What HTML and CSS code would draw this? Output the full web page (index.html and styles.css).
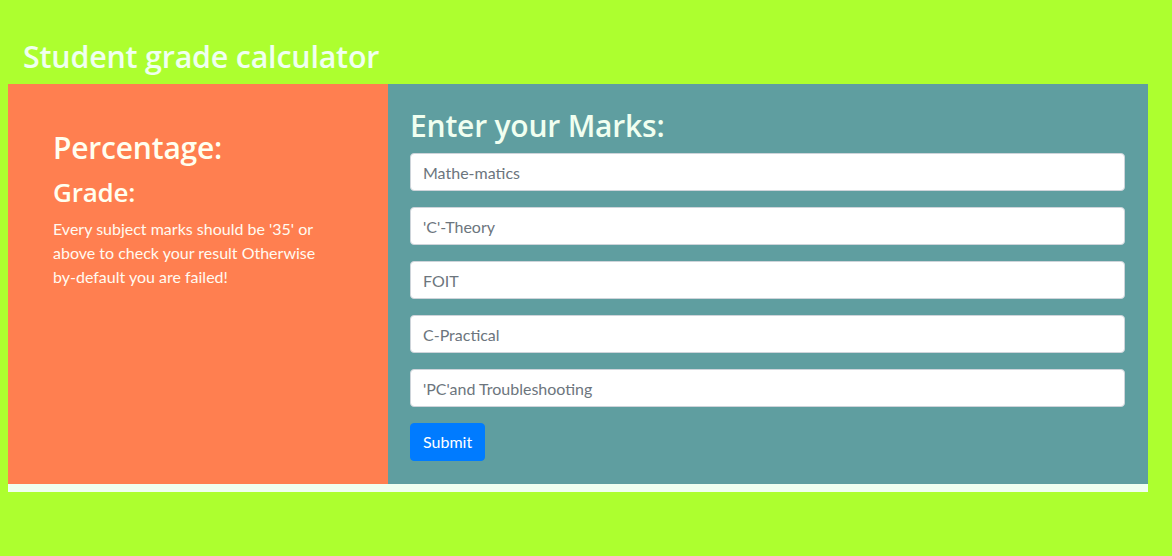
FILE: index.html
```html
<!DOCTYPE html>
<html lang="en">
<head>
<meta charset="utf-8">
<title>Student grade calculator</title>
<link rel="stylesheet" href="styles.css">
</head>
<body>
<div class="page">
  <h1 class="title">Student grade calculator</h1>
  <div class="board">
    <div class="result">
      <h2 class="pct">Percentage:</h2>
      <h3 class="grade">Grade:</h3>
      <p class="note">Every subject marks should be '35' or above to check your result Otherwise by-default you are failed!</p>
    </div>
    <form class="marks">
      <h2 class="marks-title">Enter your Marks:</h2>
      <input class="field" type="text" placeholder="Mathe-matics">
      <input class="field" type="text" placeholder="'C'-Theory">
      <input class="field" type="text" placeholder="FOIT">
      <input class="field" type="text" placeholder="C-Practical">
      <input class="field" type="text" placeholder="'PC'and Troubleshooting">
      <button class="submit" type="button">Submit</button>
    </form>
  </div>
  <div class="strip"></div>
</div>
</body>
</html>
```

FILE: styles.css
```css
html, body {
  margin: 0;
  padding: 0;
}
body {
  background: #adff2f;
  font-family: Lato, "Open Sans", sans-serif;
  font-size: 16px;
  line-height: 1.5;
  color: #212529;
}
.page {
  width: 1140px;
  margin: 0 0 0 8px;
  padding-top: 8px;
}
.title, .pct, .grade, .marks-title {
  font-family: "Open Sans", Lato, sans-serif;
  font-weight: 600;
  letter-spacing: -0.2px;
}
.title {
  margin: 0;
  padding: 31px 0 0 15px;
  height: 45px;
  font-size: 30.4px;
  line-height: 36px;
  color: #f0fff0;
}
.board {
  display: flex;
  height: 400px;
}
.result {
  width: 380px;
  box-sizing: border-box;
  background: #ff7f50;
  padding: 45px 45px 0 45px;
  color: #fffff0;
}
.pct {
  margin: 0 0 8px;
  font-size: 30px;
  line-height: 38px;
}
.grade {
  margin: 0 0 8px;
  font-size: 26px;
  line-height: 34px;
}
.note {
  margin: 0;
  max-width: 282px;
  font-size: 16px;
  line-height: 24px;
  color: #fffaf0;
}
.marks {
  flex: 1;
  box-sizing: border-box;
  background: #5f9ea0;
  padding: 23px 23px 0 22px;
  display: flex;
  flex-direction: column;
  align-items: flex-start;
}
.marks-title {
  margin: 0 0 8px;
  font-size: 30px;
  line-height: 38px;
  color: #f0fff0;
}
.field {
  display: block;
  width: 100%;
  box-sizing: border-box;
  height: 38px;
  margin: 0 0 16px;
  padding: 6px 12px;
  font-family: inherit;
  font-size: 16px;
  line-height: 24px;
  color: #495057;
  background: #fff;
  border: 1px solid #ced4da;
  border-radius: 4px;
}
.field::placeholder {
  color: #6c757d;
  opacity: 1;
}
.submit {
  height: 38px;
  padding: 6px 12px;
  font-family: inherit;
  font-size: 16px;
  line-height: 24px;
  color: #fff;
  background: #007bff;
  border: 1px solid #007bff;
  border-radius: 4px;
}
.strip {
  height: 8px;
  background: #f0fff0;
}
```
